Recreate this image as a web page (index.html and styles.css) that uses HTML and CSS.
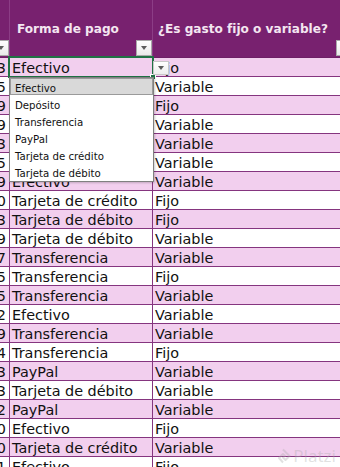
FILE: index.html
```html
<!DOCTYPE html>
<html lang="es">
<head>
<meta charset="utf-8">
<title>Gastos</title>
<link rel="stylesheet" href="styles.css">
</head>
<body>
<div class="sheet">
  <div class="hdr">
    <div class="hc ca"><span class="ht"></span><span class="fbtn"><i class="tri"></i></span></div>
    <div class="hc cb"><span class="ht">Forma de pago</span><span class="fbtn"><i class="tri"></i></span></div>
    <div class="hc cc"><span class="ht">¿Es gasto fijo o variable?</span><span class="fbtn"><i class="tri"></i></span></div>
  </div>

  <div class="row pink">
    <div class="c ca"><span>3</span></div>
    <div class="c cb active">Efectivo
      <span class="sel"><i class="handle"></i></span>
      <span class="ddbtn"><i class="tri"></i></span>
      <ul class="list">
        <li class="on">Efectivo</li>
        <li>Depósito</li>
        <li>Transferencia</li>
        <li>PayPal</li>
        <li>Tarjeta de crédito</li>
        <li>Tarjeta de débito</li>
      </ul>
    </div>
    <div class="c cc">Fijo</div>
  </div>
  <div class="row"><div class="c ca"><span>5</span></div><div class="c cb"></div><div class="c cc">Variable</div></div>
  <div class="row pink"><div class="c ca"><span>9</span></div><div class="c cb"></div><div class="c cc">Fijo</div></div>
  <div class="row"><div class="c ca"><span>9</span></div><div class="c cb"></div><div class="c cc">Variable</div></div>
  <div class="row pink"><div class="c ca"><span>3</span></div><div class="c cb"></div><div class="c cc">Variable</div></div>
  <div class="row"><div class="c ca"><span>5</span></div><div class="c cb"></div><div class="c cc">Variable</div></div>
  <div class="row pink"><div class="c ca"><span>9</span></div><div class="c cb">Efectivo</div><div class="c cc">Variable</div></div>
  <div class="row"><div class="c ca"><span>0</span></div><div class="c cb">Tarjeta de crédito</div><div class="c cc">Fijo</div></div>
  <div class="row pink"><div class="c ca"><span>3</span></div><div class="c cb">Tarjeta de débito</div><div class="c cc">Fijo</div></div>
  <div class="row"><div class="c ca"><span>9</span></div><div class="c cb">Tarjeta de débito</div><div class="c cc">Variable</div></div>
  <div class="row pink"><div class="c ca"><span>7</span></div><div class="c cb">Transferencia</div><div class="c cc">Variable</div></div>
  <div class="row"><div class="c ca"><span>5</span></div><div class="c cb">Transferencia</div><div class="c cc">Fijo</div></div>
  <div class="row pink"><div class="c ca"><span>5</span></div><div class="c cb">Transferencia</div><div class="c cc">Variable</div></div>
  <div class="row"><div class="c ca"><span>2</span></div><div class="c cb">Efectivo</div><div class="c cc">Variable</div></div>
  <div class="row pink"><div class="c ca"><span>9</span></div><div class="c cb">Transferencia</div><div class="c cc">Variable</div></div>
  <div class="row"><div class="c ca"><span>4</span></div><div class="c cb">Transferencia</div><div class="c cc">Fijo</div></div>
  <div class="row pink"><div class="c ca"><span>3</span></div><div class="c cb">PayPal</div><div class="c cc">Variable</div></div>
  <div class="row"><div class="c ca"><span>3</span></div><div class="c cb">Tarjeta de débito</div><div class="c cc">Variable</div></div>
  <div class="row pink"><div class="c ca"><span>2</span></div><div class="c cb">PayPal</div><div class="c cc">Variable</div></div>
  <div class="row"><div class="c ca"><span>0</span></div><div class="c cb">Efectivo</div><div class="c cc">Fijo</div></div>
  <div class="row pink"><div class="c ca"><span>0</span></div><div class="c cb">Tarjeta de crédito</div><div class="c cc">Variable</div></div>
  <div class="row"><div class="c ca"><span>1</span></div><div class="c cb">Efectivo</div><div class="c cc">Fijo</div></div>

  <div class="wm">
    <svg class="wm-logo" width="16" height="16" viewBox="0 0 16 16"><path d="M8 1.5 L14.5 8 L10.5 12 L8 9.5 L10 8 L8 6 L4 10 L8 14.5" fill="none" stroke="currentColor" stroke-width="2" stroke-linejoin="round"/></svg>
    <span class="wm-t">Platzi</span>
  </div>
</div>
</body>
</html>
```
FILE: styles.css
```css
html, body { margin: 0; padding: 0; background: #fff; }
body { overflow: hidden; font-family: "DejaVu Sans", sans-serif; }

.sheet { position: relative; width: 340px; height: 467px; overflow: hidden; }

.hdr { display: flex; height: 58px; background: #78216f; border-bottom: 1px solid #6e1f66; box-sizing: border-box; }
.hc { box-sizing: border-box; display: flex; flex-direction: column; justify-content: space-between; border-right: 1px solid #8c3d86; overflow: hidden; }
.ca { flex: 0 0 10px; width: 10px; }
.cb { flex: 0 0 143px; width: 143px; }
.cc { flex: 0 0 200px; width: 200px; }
.ht { color: #f4e6f1; font-weight: bold; font-size: 12.1px; line-height: 14px; padding-top: 22px; white-space: nowrap; }
.hc.cb .ht { padding-left: 7px; }
.hc.cc .ht { padding-left: 5px; }
.fbtn { align-self: flex-end; flex: 0 0 16px; width: 16px; height: 16px; box-sizing: border-box; margin-bottom: 1px; border: 1px solid #a9a9a9; background: linear-gradient(#fefefe, #eaeaea); display: flex; align-items: center; justify-content: center; }
.tri { display: block; width: 0; height: 0; border-left: 3.5px solid transparent; border-right: 3.5px solid transparent; border-top: 4px solid #5c5c5c; }

.row { display: flex; height: 19px; background: #fff; }
.row.pink { background: #f2cfee; }
.c { box-sizing: border-box; height: 19px; border-right: 1px solid #85357f; border-bottom: 1px solid #85357f; font-size: 14.4px; line-height: 16px; padding-top: 2px; color: #111; white-space: nowrap; }
.c.ca { display: flex; justify-content: flex-end; overflow: hidden; padding-right: 0; }
.c.ca span { flex: 0 0 auto; margin-right: 3px; }
.c.cb { padding-left: 2px; }
.c.cc { padding-left: 2px; }

.active { position: relative; }
.sel { position: absolute; left: -2px; top: -2px; right: -2px; bottom: -2px; border: 2px solid #1f7244; }
.handle { position: absolute; right: -4px; bottom: -4px; width: 4px; height: 4px; background: #1f7244; border: 1px solid #fff; }
.ddbtn { position: absolute; left: calc(100% + 1px); top: 3px; width: 16px; height: 14px; box-sizing: border-box; border: 1px solid #c8c8c8; background: linear-gradient(#ffffff, #ededed); display: flex; align-items: center; justify-content: center; }
.list { position: absolute; left: -1px; top: 19px; width: 145px; margin: 0; padding: 0 0 1px 0; list-style: none; box-sizing: border-box; background: #fff; border: 1px solid #808080; box-shadow: 1px 1px 2px rgba(0,0,0,0.2); z-index: 2; }
.list li { box-sizing: border-box; height: 17px; border: 1px solid transparent; padding: 2px 0 0 4px; font-size: 10.2px; line-height: 15px; color: #111; overflow: hidden; }
.list li.on { background: #d9d9d9; border-color: #9a9a9a; }

.wm { position: absolute; right: 4px; bottom: 3px; display: flex; align-items: center; gap: 2px; color: rgba(170,170,170,0.35); }
.wm-logo { display: block; }
.wm-t { font-family: "Noto Sans", sans-serif; font-size: 17px; line-height: 17px; }
```
